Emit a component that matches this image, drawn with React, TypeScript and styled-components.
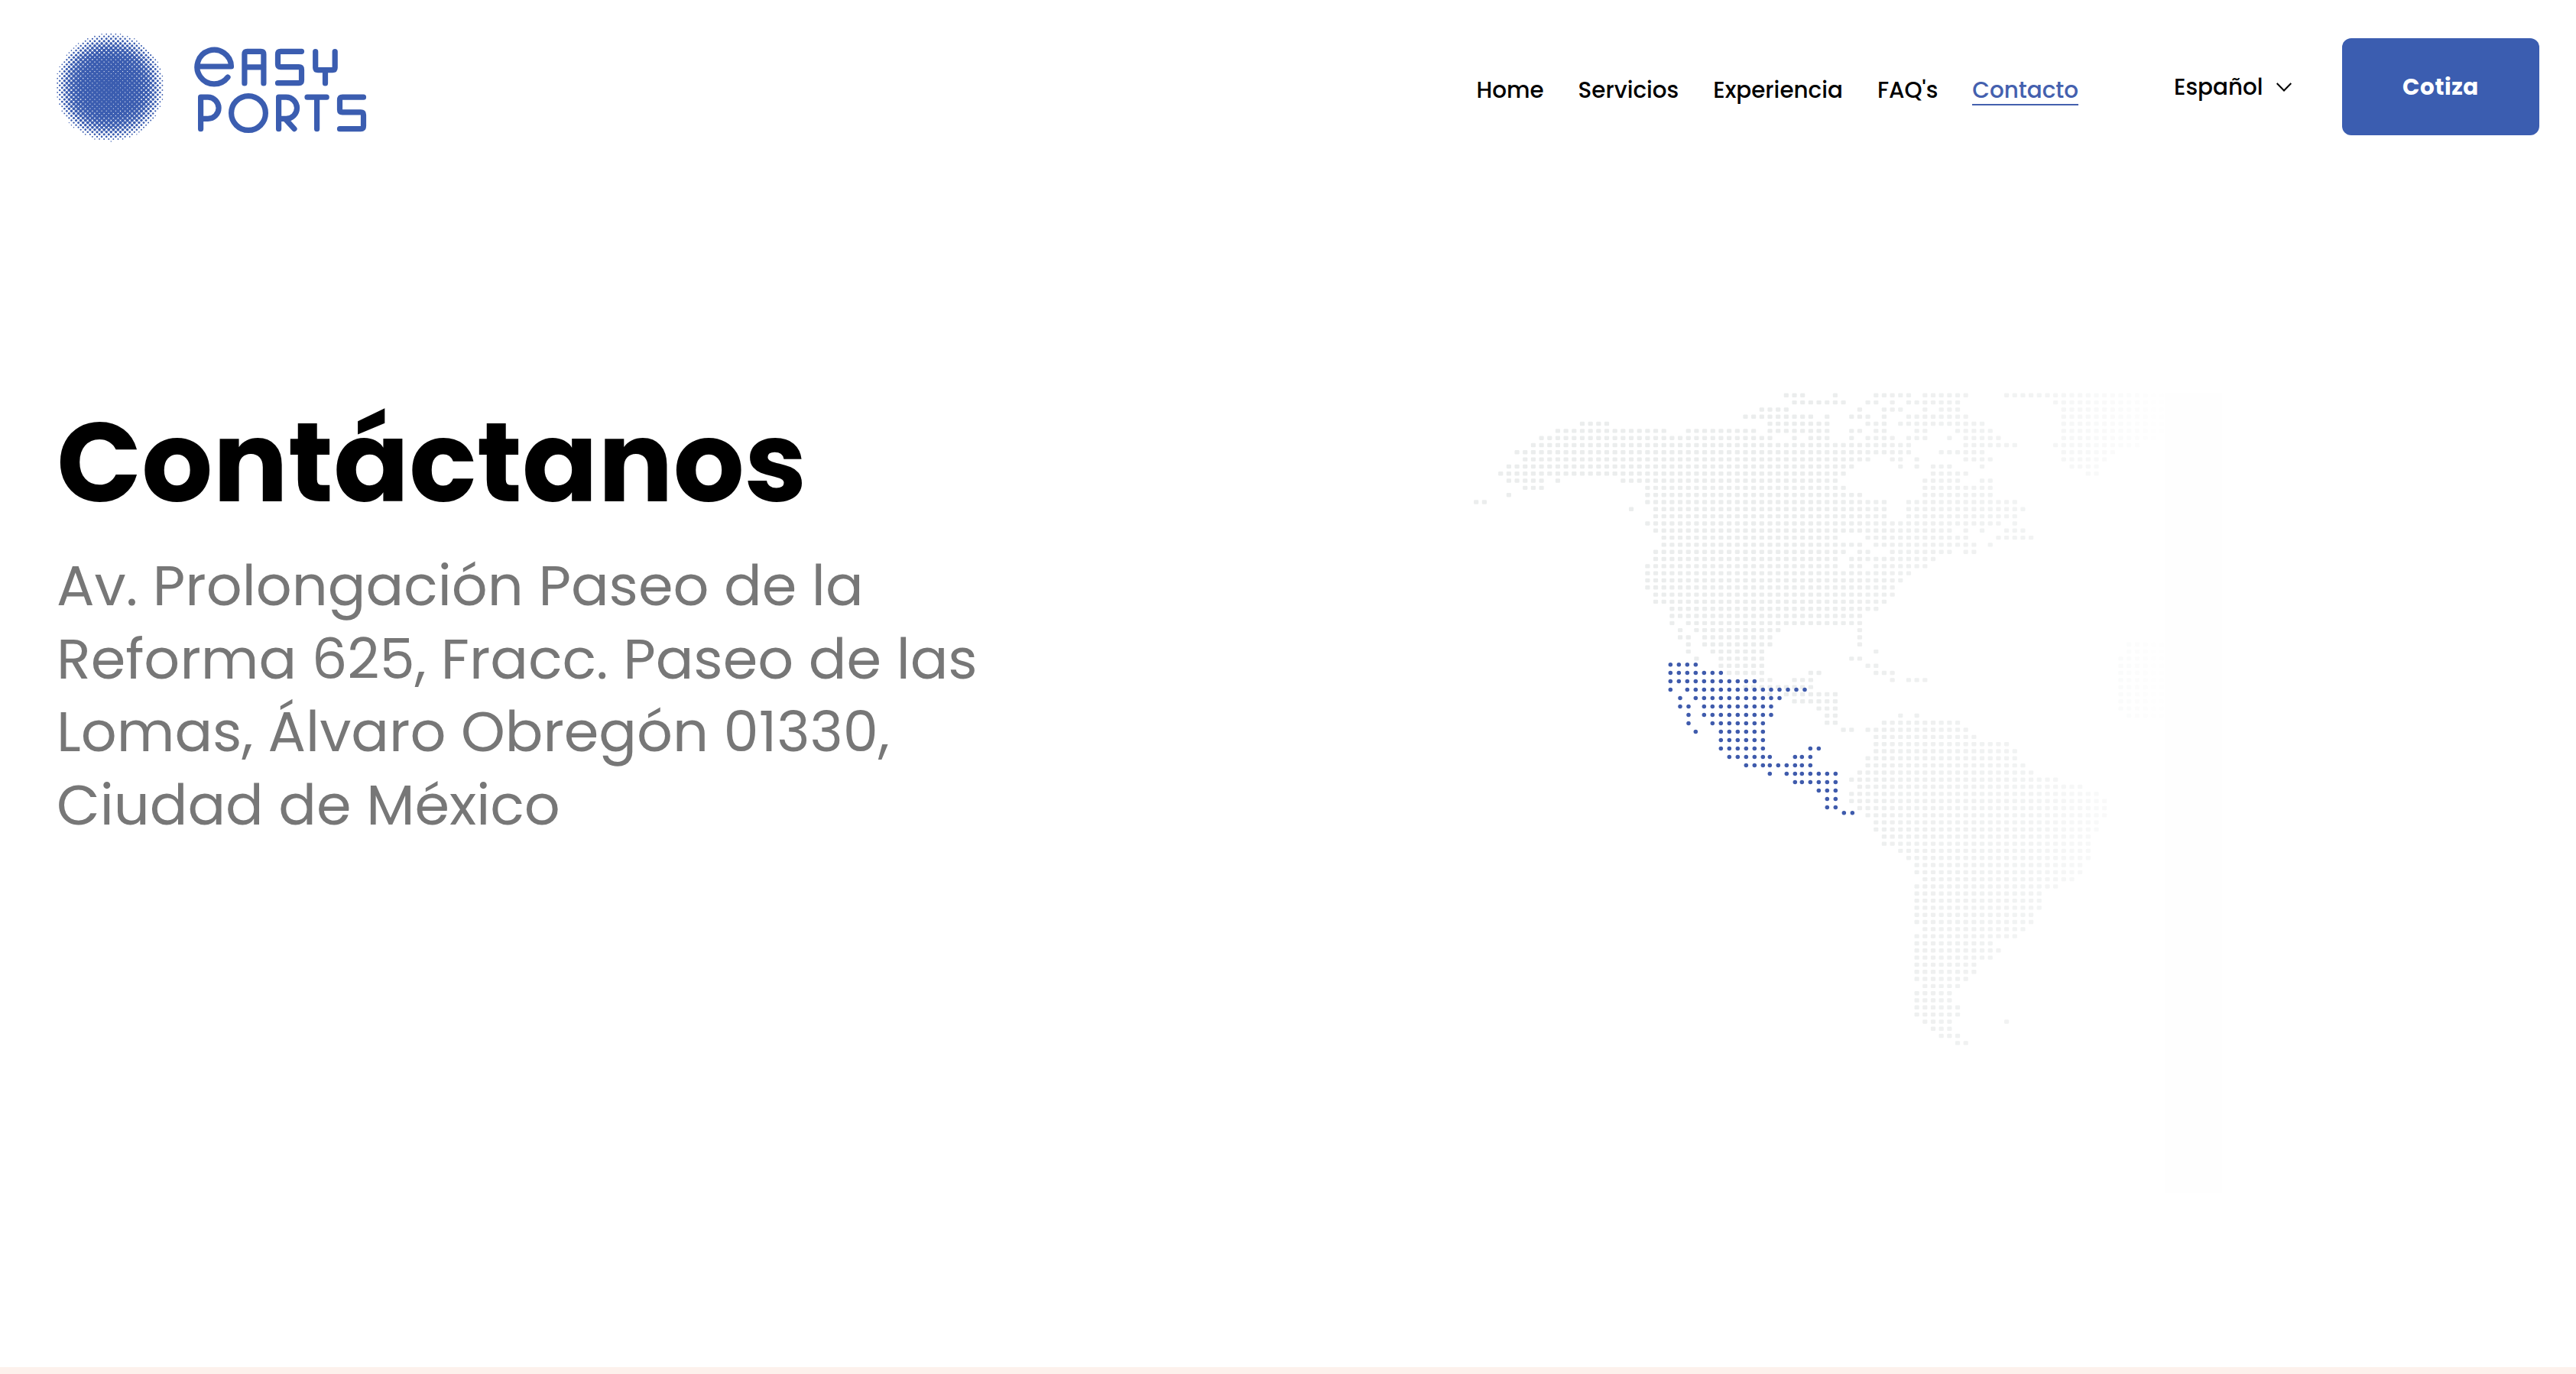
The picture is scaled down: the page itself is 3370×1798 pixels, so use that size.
import React from 'react';
import styled, { createGlobalStyle } from 'styled-components';

const GlobalStyle = createGlobalStyle`
  * { box-sizing: border-box; }
  body { margin: 0; background: #ffffff; font-family: Poppins, Inter, "Open Sans", sans-serif; color: #000; }
`;

const Page = styled.div`
  min-height: 1798px;
  display: flex;
  flex-direction: column;
`;

const Header = styled.header`
  height: 226px;
  padding: 41px 48px 0 73px;
  display: flex;
  align-items: flex-start;
`;

const LogoLink = styled.a`
  display: block;
  height: 146px;
`;

const Nav = styled.nav`
  display: flex;
  align-items: flex-start;
  gap: 45px;
  margin-left: auto;
  padding-top: 52px;
`;

const NavLink = styled.a<{ $active?: boolean }>`
  height: 45px;
  font-size: 29.38px;
  line-height: 50px;
  font-weight: 500;
  white-space: nowrap;
  color: ${p => (p.$active ? '#4460ae' : '#000')};
  border-bottom: 2px solid ${p => (p.$active ? '#4460ae' : 'transparent')};
`;

const Language = styled.div`
  display: flex;
  align-items: center;
  gap: 18px;
  margin: 48px 66px 0 125px;
  font-size: 29.38px;
  line-height: 50px;
  font-weight: 500;
`;

const LanguageName = styled.span`
  width: 116px;
  white-space: nowrap;
`;

const QuoteButton = styled.button`
  width: 258px;
  height: 127px;
  margin-top: 9px;
  border: 0;
  border-radius: 12px;
  background: #3b5db0;
  color: #fff;
  font: 700 29.38px/50px Poppins, Inter, sans-serif;
  letter-spacing: 0.6px;
`;

const Hero = styled.main`
  flex: 1;
  display: flex;
  justify-content: space-between;
  padding: 285px 460px 0 74px;
`;

const Intro = styled.section`
  width: 1260px;
`;

const Title = styled.h1`
  margin: 0;
  padding-top: 14px;
  font-size: 146.1px;
  line-height: 160px;
  font-weight: 700;
`;

const Address = styled.p`
  width: 1240px;
  margin: 34px 0 0;
  font-size: 73.46px;
  line-height: 95.7px;
  color: #777777;
`;

const MapArea = styled.figure`
  width: 990px;
  height: 1060px;
  margin: 0;
`;

const NextSection = styled.section`
  height: 9px;
  background: #fdf1ec;
`;

const blue = '#3b5db0';

/* Dot radius by distance from the centre of the disc. */
const RADII: [number, number][] = [[0, 2.75], [40, 2.5], [50, 2.25], [60, 1.75], [66, 1.25], [72, 0.6]];

function dotRadius(d: number) {
  for (let k = 1; k < RADII.length; k++) {
    const [d1, r1] = RADII[k];
    const [d0, r0] = RADII[k - 1];
    if (d <= d1) return r0 + ((d - d0) / (d1 - d0)) * (r1 - r0);
  }
  return 0;
}

function Halftone() {
  const step = 3.05;
  const dots: React.ReactNode[] = [];
  for (let i = -24; i <= 24; i++) {
    for (let j = 0; j <= 46; j++) {
      if ((i + j) % 2 !== 0) continue;
      const x = 72.3 + i * step;
      const y = 3.7 + j * step;
      const d = Math.hypot(x - 70.9, y - 73.1);
      if (d > 71) continue;
      dots.push(<circle key={`${i},${j}`} cx={x} cy={y} r={dotRadius(d)} />);
    }
  }
  return <g fill={blue}>{dots}</g>;
}

function Logo() {
  return (
    <svg width="410" height="146" viewBox="0 0 410 146" role="img" aria-label="Easy Ports">
      <Halftone />
      <g transform="translate(-73 -41)" fill="none" stroke={blue} strokeWidth="7.2" strokeLinecap="round" strokeLinejoin="round">
        <path d="M258.500 87H302.500A22.300 22.300 0 1 0 298 101" />
        <path d="M319.900 109V71Q319.900 67.300 323.500 67.300H341.300Q344.900 67.300 344.900 71V109M320 87.800H345" />
        <path d="M394.500 67.300H367Q363.500 67.300 363.500 71V84Q363.500 87.600 367 87.600H391Q394.500 87.600 394.500 91V105Q394.500 108.700 391 108.700H363.500" />
        <path d="M412.700 67.500V88.500Q412.700 91.700 416 91.700H435Q438.200 91.700 438.200 88.500V67.500M425.500 92V109" />
        <path d="M262.600 168.700V127.200H272A14.100 14.100 0 0 1 272 155.400H262.600" />
        <circle cx="325" cy="148" r="22.400" />
        <path d="M364.600 168.700V127.200H374.400A14.100 14.100 0 0 1 374.400 155.400H364.600M373.500 156L385 168.700" />
        <path d="M402 127.200H427.200M414.600 127.200V168.700" />
        <path d="M475.500 127.200H448Q444.500 127.200 444.500 131V143.500Q444.500 146.900 448 146.900H472Q475.500 146.900 475.500 150.500V165Q475.500 168.700 472 168.700H444.500" />
      </g>
    </svg>
  );
}

const COL = 10.675;
const ROW = 9.314;

/* Filled column spans of the dotted continents, one line per row of the grid. */
const LAND = `38-40 44 49-53 55-60 65-84
39-45 48-49 51 53-59 71-84
35-38 47 50-52 55 57-59 72-84
33-41 43 46-48 50 53-60 72-84
13-16 36-43 48-50 52-62 72-84
10-23 26-34 36-43 46-47 49-50 54-55 59-63 72-84
8-36 39 41-43 46 48-51 53-55 58 60-64 72-83
7-53 60-66 71-81
5-53 57-62 72-78
6-48 51-52 54 60-63 72-77
4-46 52 54 56-58 62 73-76
3-45 56-60 75-76
4-8 10 18-44 55-59 62-63
6-8 21-45 55-63
4 21-47 55-63
0-1 21-50 53-66
19 22-50 53-67
22-50 53-66
21-64 66
22-58 60 62 65-67
23-44 48-60 64-68
23-47 49-61 63
22-45 47-48 51-58 60-61
22-44 46-56
21-44 46-47 49-55
21-53
21-52
21-51
22-51
22-50
24-49
24-47
24 26-47
25 27-37 47
25-26 28-36 47
26 28-36 47 80-84
26 29-35 49 80-84
27 30-35 46-47 79-84
30-35 48-49 79-84
31-35 41-42 49-51 79-84
35-36 39-41 51 53-55 79-84
33-41 79-84
36 38-44 79-84
39-44 79-84
42-44 79-84
43-44 52 54 80-84
43-44 50-59
45-46 48-60
49-61
49-65
49-66
48-66
48-67
47-68
46-71
47-74
46-76
46-77
47-77
48-77
49-76
49-76
50-75
50-75
52-75
53-75
54-74
54-74
55-73
54-71
54-69
54-69
54-69
54-68
54-68
55-67
54-66
54-63
54-64
54-63
54-61
54-61
54-60
55-59
54-58
54-58
54-59
54-59
55-58 65
56-58
57-59
59-60`.split('\n');

const span = (a: number, b: number) => {
  const out: number[] = [];
  for (let x = a; x <= b; x += 33) out.push(x);
  return out;
};

/* Highlighted region: row offset, then dot offsets along the row (thirds of a pixel). */
const REGION: [number, number[]][] = [
  [209, span(136, 235)],
  [241.5, span(136, 334)],
  [274.5, span(136, 466)],
  [307.5, [136, ...span(202, 499), 531, 564, 597, 630, 663]],
  [340.5, [174, ...span(235, 499), 531, 564]],
  [373.5, [174, 207, ...span(268, 499), 531]],
  [406.5, [207, ...span(268, 499), 531]],
  [439.5, [207, ...span(301, 499)]],
  [472.5, [235, ...span(334, 499)]],
  [505.5, span(334, 499)],
  [538.5, [...span(334, 499), 685, 718]],
  [571.5, [...span(367, 499), 526, 625, 652, 685]],
  [604.5, [433, 466, 499, 526, 559, 592, 625, 652, 685]],
  [637.5, [526, 592, 625, 652, 685, 718, 751, 784]],
  [670.5, [625, 652, 685, 718, 751, 784]],
  [703.5, [718, 751, 784]],
  [736.5, [751, 784]],
  [769.5, [751, 784]],
  [791.5, [817, 850]],
];

/* The land fades out towards the east. */
function shade(col: number) {
  if (col < 40) return 1;
  if (col < 68) return 1 - ((col - 40) / 28) * 0.33;
  return Math.max(0.06, 0.67 - ((col - 68) / 15) * 0.6);
}

function DottedMap() {
  const dots: React.ReactNode[] = [];
  LAND.forEach((line, r) => {
    line.split(' ').forEach(part => {
      const [a, b = a] = part.split('-').map(Number);
      for (let c = a; c <= b; c++) {
        dots.push(
          <rect
            key={`${r},${c}`}
            x={11.2 + c * COL - 3.1}
            y={6.3 + r * ROW - 2.7}
            width="6.2"
            height="5.4"
            rx="1.3"
            opacity={shade(c)}
          />,
        );
      }
    });
  });
  return (
    <svg width="990" height="1060" viewBox="0 0 990 1060" aria-label="Mapa">
      <rect x="912" y="3" width="75" height="1047" fill="#fefefe" />
      <g fill="#ebeded">{dots}</g>
      <g fill="#3f5bac">
        {REGION.map(([y, xs]) =>
          xs.map(x => <circle key={`${x},${y}`} cx={220 + x / 3} cy={289 + y / 3} r="2.75" />),
        )}
      </g>
    </svg>
  );
}

export default function App() {
  return (
    <>
      <GlobalStyle />
      <Page>
        <Header>
          <LogoLink><Logo /></LogoLink>
          <Nav>
            <NavLink>Home</NavLink>
            <NavLink>Servicios</NavLink>
            <NavLink>Experiencia</NavLink>
            <NavLink>FAQ's</NavLink>
            <NavLink $active>Contacto</NavLink>
          </Nav>
          <Language>
            <LanguageName>Español</LanguageName>
            <svg width="20" height="12" viewBox="0 0 20 12" fill="none" stroke="#000" strokeWidth="2">
              <path d="M0.700 1L10 10.500L19.300 1" />
            </svg>
          </Language>
          <QuoteButton>Cotiza</QuoteButton>
        </Header>
        <Hero>
          <Intro>
            <Title>Contáctanos</Title>
            <Address>
              Av. Prolongación Paseo de la Reforma 625, Fracc. Paseo de las
              Lomas, Álvaro Obregón 01330, Ciudad de México
            </Address>
          </Intro>
          <MapArea><DottedMap /></MapArea>
        </Hero>
        <NextSection />
      </Page>
    </>
  );
}
